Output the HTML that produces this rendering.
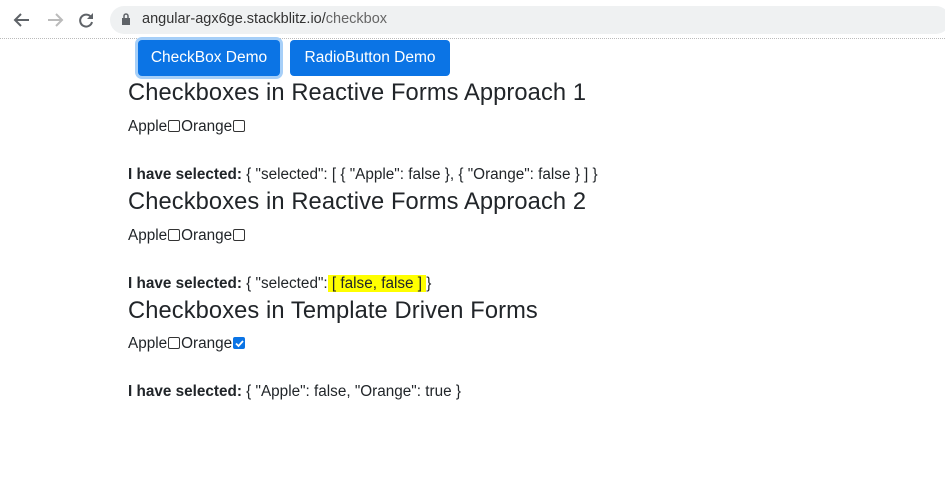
<!DOCTYPE html>
<html><head><meta charset="utf-8"><style>
*{margin:0;padding:0;box-sizing:border-box}
body{width:945px;height:496px;background:#fff;font-family:"Liberation Sans",sans-serif;color:#212529;position:relative;overflow:hidden}
.a{position:absolute;white-space:nowrap}
.url{position:absolute;left:110px;top:6px;width:840px;height:28px;background:#eff1f2;border-radius:14px}
.line{position:absolute;left:0;top:38px;width:945px;border-top:1px dotted #bbb}
.btn{position:absolute;top:40px;height:36px;background:#0b74e5;color:#fff;border-radius:4px;font-size:15.5px;line-height:36px;text-align:center}
h2{position:absolute;left:128px;font-size:23.7px;font-weight:normal;color:#212529;white-space:nowrap;letter-spacing:0.1px}
.t{position:absolute;left:128px;font-size:15.3px;white-space:nowrap}
.cb{display:inline-block;width:12px;height:12px;border:1px solid #333;border-radius:2px;vertical-align:-1px;background:#fff;margin:0 1px}
.cb.on{background:#0b74e5;border-color:#0b74e5;position:relative}
.hl{background:#ffff00}
b{font-weight:bold}
</style></head><body>
<div class="url"></div>
<svg class="a" style="left:12px;top:10px" width="100" height="20" viewBox="0 0 100 20">
<path d="M17 10H4M9 4L3 10l6 6" stroke="#5f6368" stroke-width="2" fill="none"/>
<path d="M36 10h13M44 4l6 6-6 6" stroke="#bbb" stroke-width="2" fill="none"/>
<path d="M79 7a6 6 0 1 0 1 5" stroke="#5f6368" stroke-width="2" fill="none"/><path d="M81 3v6h-6z" fill="#5f6368"/>
</svg>
<svg class="a" style="left:121px;top:13px" width="10" height="12"><rect x="1" y="5" width="8" height="7" fill="#5f6368"/><path d="M3 5V3a2 2 0 0 1 4 0v2" stroke="#5f6368" stroke-width="1.5" fill="none"/></svg>
<div class="a" style="left:142px;top:11px;font-size:14.5px;color:#333">angular-agx6ge.stackblitz.io/<span style="color:#666">checkbox</span></div>
<div class="line"></div>
<div class="btn" style="left:138px;width:142px;box-shadow:0 0 0 3px #a6cff8">CheckBox Demo</div>
<div class="btn" style="left:290px;width:160px">RadioButton Demo</div>
<h2 style="top:80px">Checkboxes in Reactive Forms Approach 1</h2>
<div class="t" style="top:118px">Apple<span class="cb"></span>Orange<span class="cb"></span></div>
<div class="t" style="top:166px"><b>I have selected:</b> { "selected": [ { "Apple": false }, { "Orange": false } ] }</div>
<h2 style="top:189px">Checkboxes in Reactive Forms Approach 2</h2>
<div class="t" style="top:227px">Apple<span class="cb"></span>Orange<span class="cb"></span></div>
<div class="t" style="top:275px"><b>I have selected:</b> { "selected":<span class="hl"> [ false, false ] </span>}</div>
<h2 style="top:298px">Checkboxes in Template Driven Forms</h2>
<div class="t" style="top:335px">Apple<span class="cb"></span>Orange<span class="cb on"><svg style="position:absolute;left:0;top:0" width="11" height="11"><path d="M2 5.5l2.5 2.5L9 3" stroke="#fff" stroke-width="1.8" fill="none"/></svg></span></div>
<div class="t" style="top:383px"><b>I have selected:</b> { "Apple": false, "Orange": true }</div>
</body></html>
